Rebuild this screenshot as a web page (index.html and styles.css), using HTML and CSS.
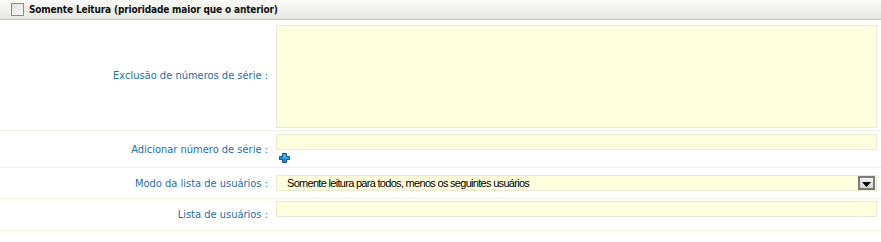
FILE: index.html
```html
<!DOCTYPE html>
<html lang="pt">
<head>
<meta charset="utf-8">
<title>Somente Leitura</title>
<link rel="stylesheet" href="styles.css">
</head>
<body>
<div class="panel">
  <div class="header">
    <span class="checkbox"></span>
    <span class="title">Somente Leitura (prioridade maior que o anterior)</span>
  </div>
  <div class="row row-textarea">
    <div class="label">Exclusão de números de série :</div>
    <div class="field"><div class="textarea"></div></div>
  </div>
  <div class="row row-add">
    <div class="label">Adicionar número de série :</div>
    <div class="field">
      <div class="input"></div>
      <svg class="plus" width="11" height="10" viewBox="0 0 11 10">
        <path d="M3.5 0.5h4v3h3v3h-3v3h-4v-3h-3v-3h3z" fill="#1d8fd0" stroke="#0f5a8a" stroke-width="1"/>
        <path d="M4.5 1.5h2v3h3v1h-3v-1h-2z" fill="#6cc2f0"/>
      </svg>
    </div>
  </div>
  <div class="row row-select">
    <div class="label">Modo da lista de usuários :</div>
    <div class="field">
      <div class="select">
        <span class="select-text">Somente leitura para todos, menos os seguintes usuários</span>
        <span class="drop"><svg width="9" height="5" viewBox="0 0 9 5"><path d="M0 0h9L4.5 5z" fill="#000"/></svg></span>
      </div>
    </div>
  </div>
  <div class="row row-list">
    <div class="label">Lista de usuários :</div>
    <div class="field"><div class="input"></div></div>
  </div>
</div>
</body>
</html>
```
FILE: styles.css
```css
html, body {
  margin: 0;
  padding: 0;
  background: #ffffff;
}

.panel {
  width: 881px;
}

.header {
  height: 19px;
  border-bottom: 1px solid #c4c4bc;
  background: linear-gradient(#fafaf8, #e6e6e2);
  display: flex;
  align-items: center;
}

.checkbox {
  width: 11px;
  height: 11px;
  margin-left: 11px;
  margin-right: 5px;
  border: 1px solid #8c8c8c;
  background: linear-gradient(135deg, #e0e0e0, #fafafa);
  box-sizing: content-box;
}

.title {
  font-family: "DejaVu Sans Condensed", "DejaVu Sans", sans-serif;
  font-weight: bold;
  font-size: 10px;
  letter-spacing: -0.15px;
  color: #111;
}

.row {
  display: flex;
  border-bottom: 1px solid #efefe4;
}

.label {
  width: 276px;
  flex: none;
  padding-right: 8px;
  box-sizing: border-box;
  display: flex;
  align-items: center;
  justify-content: flex-end;
  font-family: "DejaVu Sans Condensed", "DejaVu Sans", sans-serif;
  font-size: 11px;
  color: #1c6fa6;
  white-space: nowrap;
}

.field {
  flex: 1;
  padding-right: 4px;
  display: flex;
  flex-direction: column;
}

.row-textarea .field { padding-top: 5px; padding-bottom: 2px; }
.row-add .field { padding-top: 3px; padding-bottom: 4px; }
.row-select .field { padding-top: 7px; padding-bottom: 7px; }
.row-list .field { padding-top: 2px; padding-bottom: 13px; }

.textarea {
  height: 103px;
  box-sizing: border-box;
  border: 1px solid #ebe9d4;
  background: #ffffdd;
}

.input {
  height: 16px;
  box-sizing: border-box;
  border: 1px solid #ebe9d4;
  background: #ffffdd;
}

.plus {
  display: block;
  margin-top: 3px;
  margin-left: 3px;
}

.select {
  height: 16px;
  box-sizing: border-box;
  border: 1px solid #ebe9d4;
  background: #ffffdd;
  display: flex;
  align-items: center;
  justify-content: space-between;
  padding-left: 10px;
  padding-right: 1px;
}

.select-text {
  font-family: "Liberation Sans", Arial, sans-serif;
  font-size: 11px;
  letter-spacing: -0.7px;
  color: #000;
}

.drop {
  width: 13px;
  height: 10px;
  border: 2px solid #7a7a7a;
  background: linear-gradient(#f4f4f4, #d4d4d4);
  display: flex;
  align-items: flex-end;
  justify-content: center;
}

.drop svg {
  display: block;
  margin-bottom: 1px;
}
```
